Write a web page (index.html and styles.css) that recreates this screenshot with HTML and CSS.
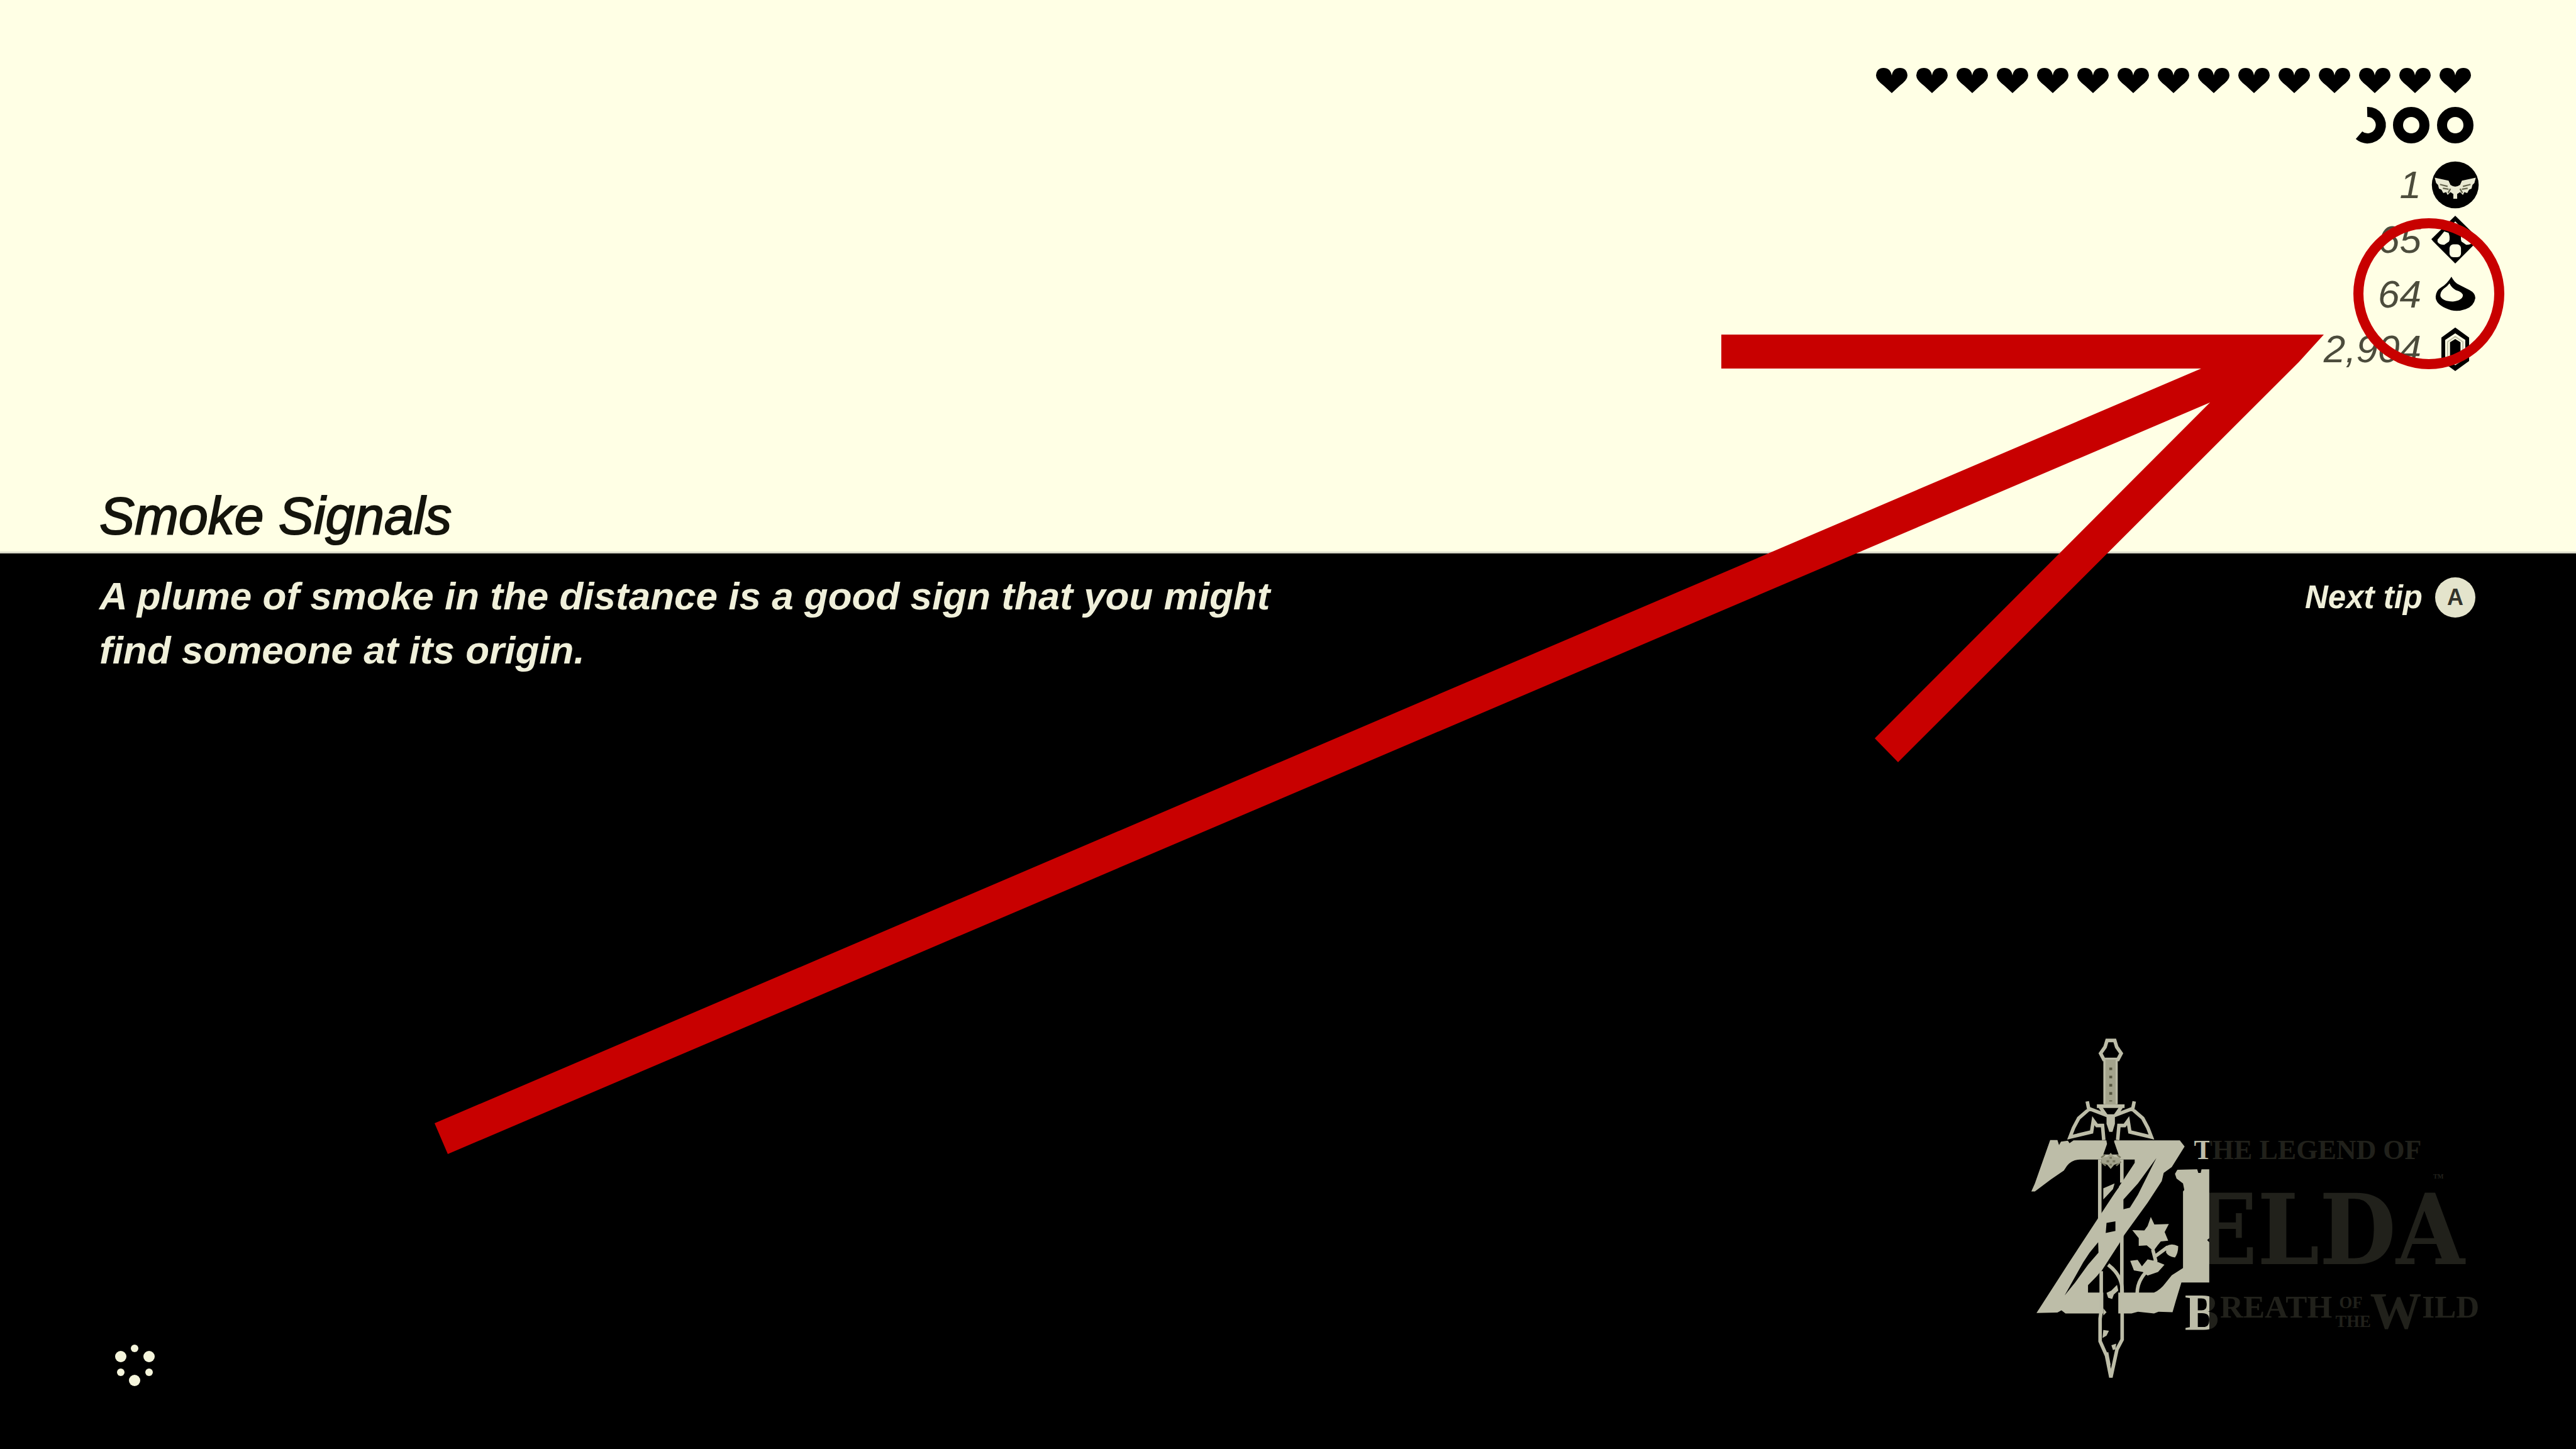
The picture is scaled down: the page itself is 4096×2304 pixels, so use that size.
FILE: index.html
```html
<!DOCTYPE html>
<html lang="en">
<head>
<meta charset="utf-8">
<title>Smoke Signals</title>
<link rel="stylesheet" href="styles.css">
</head>
<body>
<svg class="defs" aria-hidden="true">
  <symbol id="heart" viewBox="0 0 64 64"><path d="M32 24 Q34 12 45 12 Q56 12 57 24 Q57 31 45 40 L32 52 L19 40 Q7 31 7 24 Q8 12 19 12 Q30 12 32 24Z"/></symbol>
  <symbol id="ring" viewBox="0 0 70 70"><circle cx="35" cy="35" r="21" fill="none" stroke="#000" stroke-width="16"/></symbol>
</svg>
<main class="screen">
  <section class="top">
    <div class="hud">
      <div class="hearts" role="img" aria-label="15 hearts">
        <svg><use href="#heart"/></svg><svg><use href="#heart"/></svg><svg><use href="#heart"/></svg><svg><use href="#heart"/></svg><svg><use href="#heart"/></svg><svg><use href="#heart"/></svg><svg><use href="#heart"/></svg><svg><use href="#heart"/></svg><svg><use href="#heart"/></svg><svg><use href="#heart"/></svg><svg><use href="#heart"/></svg><svg><use href="#heart"/></svg><svg><use href="#heart"/></svg><svg><use href="#heart"/></svg><svg><use href="#heart"/></svg>
      </div>
      <div class="stamina" role="img" aria-label="Stamina">
        <svg viewBox="0 0 70 70"><path d="M35 14 A21 21 0 1 1 22 51" fill="none" stroke="#000" stroke-width="16"/></svg>
        <svg><use href="#ring"/></svg>
        <svg><use href="#ring"/></svg>
      </div>
      <ul class="counts">
        <li><span>1</span>
          <svg viewBox="0 0 100 100"><circle cx="50" cy="50" r="49"/><path fill="#e9e9d2" d="M7 35 L36 41 L40 50 Q50 57 60 50 L64 41 L93 35 L90 46 L86 50 L84 58 L79 60 L75 67 L69 65 L66 71 L60 65 L54 69 V79 H46 V69 L40 65 L34 71 L31 65 L25 67 L21 60 L16 58 L14 50 L10 46Z"/><path d="M18 49 L34 53 M24 57 L36 59 M35 67 L40 58 M82 49 L66 53 M76 57 L64 59 M65 67 L60 58" stroke="#66664f" stroke-width="3"/></svg></li>
        <li><span>65</span>
          <svg viewBox="0 0 100 100"><path d="M50 0 L100 49 L96 54 L50 100 L4 54 L0 49Z"/><g fill="#ffffe5"><path d="M13 50 L27 33 L36 36 Q40 46 37 54 L27 61 Q17 61 13 55Z"/><path d="M87 50 L73 33 L64 36 Q60 46 63 54 L73 61 Q83 61 87 55Z"/><rect x="38" y="60" width="24" height="27" rx="8"/><path d="M50 12 L58 20 L50 25 L42 20Z"/></g></svg></li>
        <li><span>64</span>
          <svg viewBox="0 0 100 100"><path d="M42 13 Q48 25 58 30 L80 41 Q92 47 92 58 Q89 75 72 81 Q50 89 30 79 Q9 70 9 55 Q10 42 20 36 Q33 28 42 13Z"/><path fill="#ffffe5" d="M38 27 Q42 36 51 41 Q66 45 66 53 Q64 63 45 65 Q24 65 19 54 Q18 45 26 38 Q34 33 38 27Z"/></svg></li>
        <li><span>2,904</span>
          <svg viewBox="0 0 100 100"><path d="M50 5 L79 26 V75 L50 96 L21 75 V26Z"/><path fill="#ffffe5" d="M50 17 L71 31 V70 L50 84 L29 70 V31Z"/><path fill="none" stroke="#c5c5ae" stroke-width="3" d="M50 24 L66 35 V66 L50 77 L34 66 V35Z"/><path d="M50 29 L61 36 V65 L50 72 L39 65 V36Z"/></svg></li>
      </ul>
    </div>
    <h1>Smoke Signals</h1>
  </section>
  <section class="bottom">
    <div class="tip">
      <p>A plume of smoke in the distance is a good sign that you might<br>find someone at its origin.</p>
      <button type="button" class="next">Next tip <span class="key">A</span></button>
    </div>
    <footer>
      <svg class="spinner" viewBox="0 0 64 64" role="img" aria-label="Loading"><circle cx="32" cy="7" r="6"/><circle cx="10" cy="20" r="9"/><circle cx="55" cy="20" r="9"/><circle cx="10" cy="45" r="6"/><circle cx="55" cy="45" r="6"/><circle cx="32" cy="58" r="9"/></svg>
      <svg class="logo" viewBox="0 0 2875 2250" role="img" aria-label="The Legend of Zelda: Breath of the Wild">
        <defs><linearGradient id="wipe" gradientUnits="userSpaceOnUse" x1="1182" y1="0" x2="1184" y2="0"><stop offset="0" stop-color="#bdbda8"/><stop offset="1" stop-color="#21211b"/></linearGradient></defs>
        <g class="word" fill="url(#wipe)">
          <text class="w-small" x="1088" y="809">THE LEGEND OF</text>
          <text class="w-name" x="1063" y="1460">ELDA</text>
          <text class="w-tm" x="2574" y="928">TM</text>
          <text class="w-big" x="1030" y="1868">B</text>
          <text class="w-mid" x="1250" y="1792">REATH</text>
          <text class="w-tiny" x="1990" y="1735">OF</text>
          <text class="w-tiny" x="1967" y="1850">THE</text>
          <text class="w-big" x="2182" y="1861">W</text>
          <text class="w-mid" x="2505" y="1792">ILD</text>
        </g>
        <path fill="#000" d="M960 860 H1183 V1600 H960Z"/>
        <g fill="#bdbda8">
          <path d="M195 690 L240 690 L250 722 L262 700 L305 694 L315 710 L340 692 H1000 L1030 730 L950 858 L900 895 L888 945 L800 1080 L655 1280 L620 1340 L510 1510 L430 1592 V1638 H840 Q880 1620 910 1580 L950 1530 L1020 1485 V1010 L1028 1000 L1020 960 L980 930 L970 900 L985 875 L1108 872 L1115 895 L1130 895 L1135 872 H1183 V1300 L1170 1312 L1183 1325 V1575 H1010 L975 1690 L955 1760 L868 1757 L840 1768 L740 1757 L700 1768 H290 L265 1748 L240 1762 L110 1765 L300 1470 L490 1180 L720 832 V812 H380 Q330 812 300 850 L280 880 L200 935 L100 1010 H78 L100 960Z"/>
          <path d="M820 1168 L842 1215 L932 1212 L906 1262 L928 1315 L882 1320 L862 1345 L836 1380 L795 1345 L745 1348 V1300 L705 1250 L780 1252 L800 1225Z"/>
          <path d="M915 1350 Q950 1328 990 1350 Q990 1395 970 1420 Q930 1415 915 1390Z"/>
          <path d="M692 1440 L738 1435 L765 1475 L800 1432 L850 1442 L905 1465 L865 1510 L800 1532 L770 1510 L715 1500Z"/>
        </g>
        <g fill="none" stroke="#bdbda8" stroke-width="22">
          <path d="M832 1370 L850 1440 L790 1510 Q735 1570 735 1645 M850 1410 L925 1355"/>
          <path d="M503 812 V1185 M640 812 V955 M640 1275 V1650"/>
        </g>
        <g fill="#000">
          <path d="M855 802 L740 960 L650 1060 V1120 L690 1110 L740 1030 L820 870Z"/>
          <path d="M493 1325 L440 1390 L400 1450 L285 1655 L350 1575 L430 1465 L495 1390Z"/>
          <path d="M545 1205 L600 1195 V1255 L540 1268Z"/>
          <path d="M618 1345 L560 1435 L620 1468Z"/>
          <path d="M525 850 H620 V985 L528 1110Z"/>
          <path d="M540 600 H602 L600 660 L592 700 L620 780 H525 L548 715 L540 670Z"/>
          <path d="M550 1478 L595 1530 L618 1570 V1980 L595 2060 L572 2095 L555 2020 L525 1960 V1520Z"/>
          <path d="M660 1480 H680 V1635 H655Z M505 1510 V1635 H440 V1600Z"/>
        </g>
        <g fill="#bdbda8">
          <path d="M525 990 L595 960 L585 995 L525 1060Z M610 1590 L575 1625 L545 1640 L555 1670 L580 1678 L590 1650 L618 1625Z M525 1870 L560 1875 L545 1905 L520 1920Z M575 1965 L605 1955 L600 1990 L585 1995Z M525 1735 L545 1760 L525 1780Z"/>
        </g>
        <g fill="none" stroke="#bdbda8" stroke-width="22">
          <path d="M512 1505 V1750 L505 1800 V1940 L545 2030 L572 2165 L610 1990 L642 1930 V1620 Q640 1530 555 1465"/>
          <path d="M545 2010 L560 2090"/>
          <path d="M548 72 H596 L608 112 L636 152 L616 190 H528 L508 152 L536 112Z"/>
          <path d="M485 480 H657"/>
          <path d="M425 450 L435 500 L372 555 L340 615 L318 672 L452 640 L463 570 L485 600 H520 L528 690 M435 495 L540 535 L505 485 M717 450 L707 500 L770 555 L802 615 L824 672 L690 640 L679 570 L657 600 H622 L614 690 M707 495 L602 535 L637 485"/>
        </g>
        <path fill="#a3a38c" d="M526 190 H614 V470 H526Z"/>
        <path fill="none" stroke="#bdbda8" stroke-width="12" d="M532 190 V465 M608 190 V465"/>
        <path fill="none" stroke="#55553f" stroke-width="18" stroke-dasharray="16 35" d="M571 240 V450"/>
        <path fill="#bdbda8" d="M545 530 H597 V590 L582 640 H562 L545 590Z"/>
        <path fill="none" stroke="#77775f" stroke-width="10" d="M512 800 L535 782 M632 800 L610 782 M510 825 L540 850 M634 825 L605 850"/>
        <path fill="#a3a38c" d="M515 800 L550 795 L571 770 L592 795 L628 800 L630 830 L592 845 L571 870 L550 845 L513 830Z"/>
        <path fill="#77775f" d="M545 815 h16 v14 h-16z M583 815 h16 v14 h-16z M564 795 h14 v12 h-14z M564 838 h14 v12 h-14z"/>
      </svg>
    </footer>
  </section>
  <svg class="marks" viewBox="0 0 4096 2304" aria-hidden="true">
    <path fill="#c80000" d="M2737 532 H3695 L3655 576 L3018 1212 L2981 1174 L3514 640 L712 1835 L691 1786 L3500 586 H2737Z"/>
    <circle cx="3862" cy="467" r="112" fill="none" stroke="#c80000" stroke-width="16"/>
  </svg>
</main>
</body>
</html>
```
FILE: styles.css
```css
* { box-sizing: border-box; }
body { margin: 0; background: #000; font-family: "Liberation Sans", Arial, sans-serif; font-style: italic; }
.defs { position: absolute; width: 0; height: 0; }
.screen { position: relative; display: flex; flex-direction: column; min-height: 100vh; }
.top { display: flex; flex-direction: column; padding: 96px 154px 7px; background: #ffffe5; border-bottom: 3px solid #d9d9c9; }
.hud { display: flex; flex-direction: column; align-items: flex-end; margin-bottom: 172px; }
.hearts { display: flex; margin-right: 6px; }
.hearts svg { width: 64px; height: 64px; }
.stamina { display: flex; margin: 4px 3px 16px 0; }
.stamina svg { width: 70px; height: 70px; }
.counts { margin: 0; padding: 0; list-style: none; font-size: 62px; color: #4c4c3c; }
.counts li { display: flex; align-items: center; justify-content: flex-end; gap: 16px; height: 87px; }
.counts svg { width: 76px; height: 76px; }
h1 { margin: 0; padding-left: 4px; font-size: 84px; line-height: 100px; font-weight: 400; color: #14140c; -webkit-text-stroke: 2px #14140c; }
.bottom { flex: 1; display: flex; flex-direction: column; padding: 25px 150px 92px 158px; background: #000; color: #f0f0da; }
.tip { display: flex; justify-content: space-between; align-items: flex-start; }
.tip p { margin: 0; font-size: 62px; font-weight: 700; line-height: 86px; }
.next { display: flex; align-items: center; gap: 20px; margin: 13px 10px 0 0; padding: 0; border: 0; background: none; color: inherit; font: italic 700 51px/64px "Liberation Sans", Arial, sans-serif; }
.key { width: 64px; height: 64px; border-radius: 50%; background: #e4e4cc; color: #33332a; font-style: normal; font-size: 36px; text-align: center; }
footer { display: flex; justify-content: space-between; align-items: flex-end; margin-top: auto; }
.spinner { width: 64px; height: 64px; margin: 0 0 11px 24px; fill: #f5f5dc; overflow: visible; }
.logo { width: 736px; height: 576px; }
.word { font-family: "Liberation Serif", "Times New Roman", serif; font-style: normal; font-weight: 700; }
.w-small { font-size: 172px; }
.w-name { font-family: "DejaVu Serif Condensed", "Liberation Serif", serif; font-size: 610px; }
.w-tm { font-size: 40px; }
.w-big { font-size: 320px; }
.w-mid { font-size: 200px; }
.w-tiny { font-size: 104px; }
.marks { position: absolute; inset: 0; width: 100%; height: 100%; }
```
